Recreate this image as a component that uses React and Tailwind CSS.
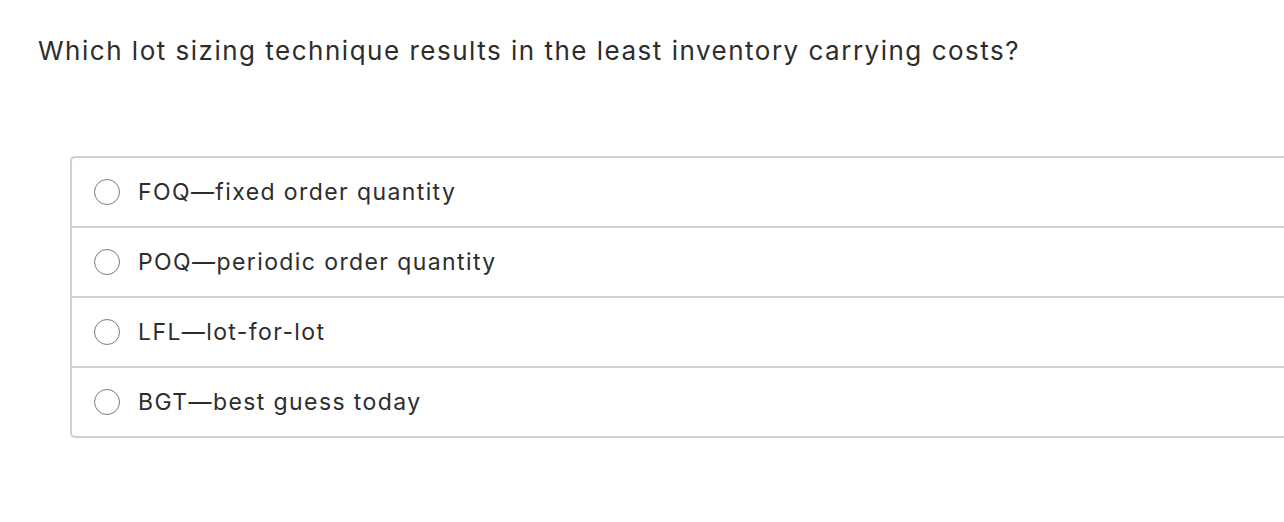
import React from "react";

const options = [
    "FOQ\u2014fixed order quantity",
    "POQ\u2014periodic order quantity",
    "LFL\u2014lot-for-lot",
    "BGT\u2014best guess today",
];

function Radio() {
    return <span className="block w-[26px] h-[26px] rounded-full border-[1.5px] border-[#7a7a7a] bg-white shrink-0" />;
}

export default function App() {
    return (
        <div className="bg-white w-[1284px] h-[522px] overflow-hidden text-[#2d2d2d]" style={{ fontFamily: "Inter, 'Noto Sans', sans-serif" }}>
            <h1 className="pl-[38px] pt-[33px] text-[26px] leading-[36px] tracking-[1.5px] font-normal">
                Which lot sizing technique results in the least inventory carrying costs?
            </h1>
            <div className="ml-[70px] mt-[87px] border-2 border-r-0 border-[#d0d0d0] rounded-l-[5px]">
                {options.map((opt, i) => (
                    <label
                        key={i}
                        className={`flex items-center gap-[18px] pl-[22px] ${i < options.length - 1 ? "h-[70px] border-b-2 border-[#d0d0d0]" : "h-[68px]"}`}
                    >
                        <Radio />
                        <span className="text-[23px] leading-none tracking-[1.4px]">{opt}</span>
                    </label>
                ))}
            </div>
        </div>
    );
}
